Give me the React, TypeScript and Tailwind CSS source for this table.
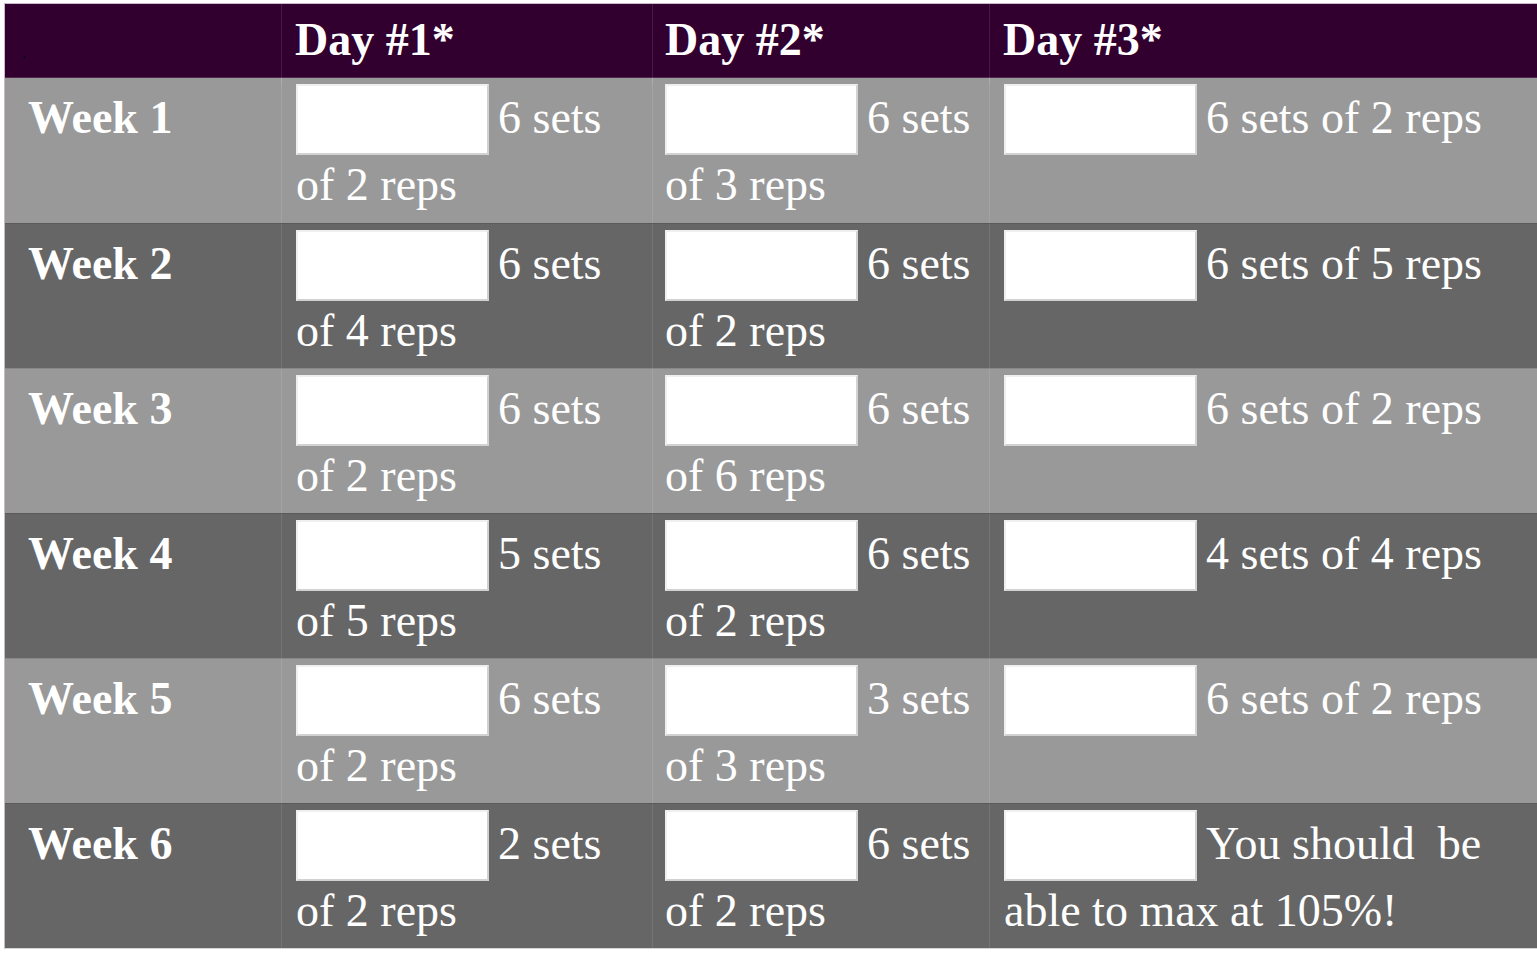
const rows: { week: string; d1: string[]; d2: string[]; d3: string[] }[] = [
  { week: "Week 1", d1: ["6 sets", "of 2 reps"], d2: ["6 sets", "of 3 reps"], d3: ["6 sets of 2 reps"] },
  { week: "Week 2", d1: ["6 sets", "of 4 reps"], d2: ["6 sets", "of 2 reps"], d3: ["6 sets of 5 reps"] },
  { week: "Week 3", d1: ["6 sets", "of 2 reps"], d2: ["6 sets", "of 6 reps"], d3: ["6 sets of 2 reps"] },
  { week: "Week 4", d1: ["5 sets", "of 5 reps"], d2: ["6 sets", "of 2 reps"], d3: ["4 sets of 4 reps"] },
  { week: "Week 5", d1: ["6 sets", "of 2 reps"], d2: ["3 sets", "of 3 reps"], d3: ["6 sets of 2 reps"] },
  { week: "Week 6", d1: ["2 sets", "of 2 reps"], d2: ["6 sets", "of 2 reps"], d3: ["You should  be", "able to max at 105%!"] },
]

const Cell = ({ lines, pad, last }: { lines: string[]; pad: string; last?: boolean }) => (
  <div className={`pt-[6px] ${pad} ${last ? "" : "border-r border-white/10"}`}>
    <div className="flex items-start">
      <div className="w-[193px] h-[71px] shrink-0 bg-white border-2 border-t-[#efefef] border-l-[#efefef] border-b-[#d2d2d2] border-r-[#d2d2d2]" />
      <span className="ml-[9px] leading-[67px] whitespace-pre">{lines[0]}</span>
    </div>
    {lines[1] && <div className="leading-[59px] whitespace-pre">{lines[1]}</div>}
  </div>
)

export default function App() {
  return (
    <div className="min-h-screen bg-white pl-[4px] pt-[3px] font-['Liberation_Serif',serif] text-[46px] text-white">
      <div className="border-t border-l border-[#c9b9c9] border-b border-b-[#d6d6d6]">
        <div className="grid grid-cols-[277px_371px_337px_1fr] h-[74px] bg-[#31002f] font-bold border-b border-white/15">
          <div className="border-r border-white/10 pl-[18px] pt-[4px]">
            <span className="text-black text-[10px] leading-[60px]">.</span>
          </div>
          <div className="border-r border-white/10 pl-[13px] leading-[60px] pt-[6px]">Day #1*</div>
          <div className="border-r border-white/10 pl-[12px] leading-[60px] pt-[6px]">Day #2*</div>
          <div className="pl-[13px] leading-[60px] pt-[6px]">Day #3*</div>
        </div>
        {rows.map((r, i) => (
          <div
            key={r.week}
            className={`grid grid-cols-[277px_371px_337px_1fr] h-[145px] ${i % 2 === 0 ? "bg-[#999999]" : "bg-[#666666]"} ${i > 0 ? "border-t border-black/10" : ""}`}
          >
            <div className="border-r border-white/10 pl-[23px] pt-[6px] font-bold leading-[67px]">{r.week}</div>
            <Cell lines={r.d1} pad="pl-[14px]" />
            <Cell lines={r.d2} pad="pl-[12px]" />
            <Cell lines={r.d3} pad="pl-[14px]" last />
          </div>
        ))}
      </div>
    </div>
  )
}
